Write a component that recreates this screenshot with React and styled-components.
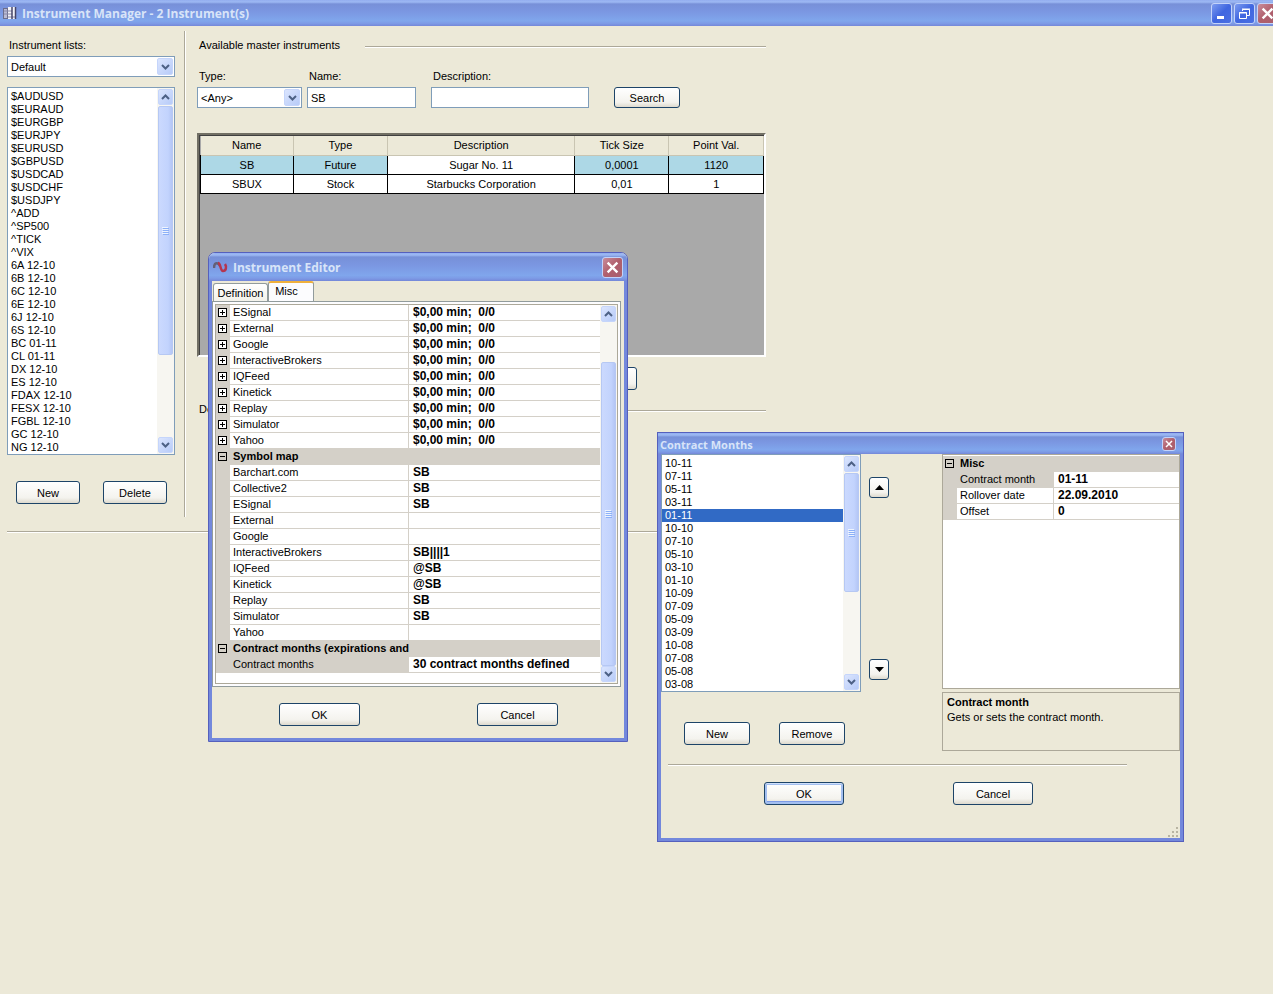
import React, { useState } from 'react';
import styled, { createGlobalStyle, css } from 'styled-components';

const GlobalStyle = createGlobalStyle`
  * {
    box-sizing: border-box;
  }
  body {
    margin: 0;
    background: #ece9d8;
    color: #000;
    font: 11px/14px "Liberation Sans", Arial, sans-serif;
    overflow: hidden;
  }
  button, input, select {
    font: inherit;
    color: inherit;
  }
`;

const Desktop = styled.div`
  position: relative;
  min-height: 100vh;
  overflow: hidden;
`;

const TitleBar = styled.header`
  display: flex;
  align-items: center;
  gap: 5px;
  height: ${(p) => p.$height}px;
  padding: 0 ${(p) => p.$pad}px;
  background: linear-gradient(#93aef0 0, #9db9f3 2px, #7790d8 4px, #7b97e2 45%, #80a6ec 80%, #7d9be6 90%, #7487d8 100%);
`;

const Title = styled.h1`
  flex: 1;
  margin: 0;
  padding-top: 2px;
  color: #d8e4f8;
  font-family: "Open Sans", "Noto Sans", sans-serif;
  font-size: ${(p) => p.$size || 12}px;
  font-weight: 700;
  line-height: 16px;
  white-space: nowrap;
`;

const CaptionButtons = styled.div`
  display: flex;
  gap: 2px;
  margin-right: -8px;
`;

const CaptionButton = styled.button`
  display: flex;
  align-items: center;
  justify-content: center;
  flex: none;
  width: ${(p) => p.$size || 21}px;
  height: ${(p) => p.$size || 21}px;
  padding: 0;
  border: 1px solid #c3d3fa;
  border-radius: 3px;
  background: ${(p) => (p.$close
    ? 'linear-gradient(135deg, #c98d9b, #b05f6c 50%, #a8606f)'
    : 'linear-gradient(135deg, #7d9cf0, #3f66e0 50%, #4a6fe2)')};
`;

const Workspace = styled.main`
  display: flex;
  padding-top: 5px;
`;

const Lists = styled.section`
  width: 185px;
  padding: 7px 9px 13px 7px;
  border-right: 1px solid #aca899;
  box-shadow: 1px 0 #fff;
`;

const Master = styled.section`
  flex: 1;
  max-width: 581px;
  padding: 7px 0 0 12px;
`;

const Field = styled.div`
  display: flex;
  flex-direction: column;
  gap: 4px;
  width: ${(p) => (p.$width ? `${p.$width}px` : 'auto')};
`;

const Label = styled.label`
  padding-left: 2px;
`;

const TextInput = styled.input`
  width: 100%;
  height: 21px;
  padding: 0 3px;
  border: 1px solid #7f9db9;
  background: #fff;
  outline: none;
`;

const ComboFrame = styled.div`
  display: flex;
  height: 21px;
  padding: 1px;
  border: 1px solid #7f9db9;
  background: #fff;
`;

const ComboSelect = styled.select`
  appearance: none;
  flex: 1;
  min-width: 0;
  padding: 0 2px;
  border: 0;
  background: transparent;
  outline: none;
`;

const arrowBox = css`
  display: flex;
  align-items: center;
  justify-content: center;
  flex: none;
  padding: 0;
  border: 1px solid #c5d5fb;
  border-radius: 2px;
  background: linear-gradient(135deg, #dbe5fe, #b7cbf8);
`;

const ComboArrow = styled.span`
  ${arrowBox}
  width: 16px;
`;

const ListFrame = styled.div`
  display: flex;
  margin-top: ${(p) => p.$top || 0}px;
  border: 1px solid #7f9db9;
  background: #fff;
`;

const ListSelect = styled.select`
  appearance: none;
  flex: 1;
  min-width: 0;
  height: ${(p) => p.size * 13 + 2}px;
  padding: 2px 0 0;
  border: 0;
  border-radius: 0;
  background: #fff;
  outline: none;
  overflow: hidden;

  option {
    height: 13px;
    min-height: 13px;
    padding: 0 3px;
    line-height: 13px;
  }
  option:checked {
    background: linear-gradient(#316ac5, #316ac5);
    -webkit-text-fill-color: #fff;
  }
`;

const ScrollTrack = styled.div`
  display: flex;
  flex-direction: column;
  flex: none;
  width: 17px;
  padding: 1px;
  background: #f7f6f1;
`;

const ScrollButton = styled.button`
  ${arrowBox}
  height: 16px;
`;

const ScrollThumb = styled.div`
  display: flex;
  align-items: center;
  justify-content: center;
  flex: none;
  height: ${(p) => p.$length}px;
  margin: ${(p) => p.$before}px 0 auto;
  border: 1px solid #b6c8f3;
  border-radius: 2px;
  background: linear-gradient(90deg, #cbd9fe, #c2d3fd 70%, #b4c6f5);
`;

const Button = styled.button`
  display: flex;
  align-items: center;
  justify-content: center;
  width: ${(p) => p.$width || 66}px;
  height: ${(p) => p.$height || 23}px;
  padding: 0;
  border: 1px solid #1d4468;
  border-radius: 3px;
  background: linear-gradient(#fff, #f4f3ee 75%, #dedace);
  ${(p) => p.$primary && 'box-shadow: inset 0 1px #cfe0fb, inset 0 0 0 2px #a3bff0, inset 0 -3px #7d9be6;'}
`;

const ButtonRow = styled.div`
  display: flex;
  gap: ${(p) => p.$gap || 0}px;
  padding: ${(p) => p.$pad || 0};
`;

const SectionHead = styled.div`
  display: flex;
  align-items: center;
  gap: 25px;
  padding-left: 2px;
`;

const Rule = styled.hr`
  flex: 1;
  height: 2px;
  margin: ${(p) => p.$margin || '3px 0 0'};
  border: 0;
  border-top: 1px solid #aca899;
  background: #fff;
`;

const SearchForm = styled.form`
  display: flex;
  align-items: flex-end;
  margin: 17px 0 25px;
`;

const Gap = styled.span`
  width: ${(p) => p.$width}px;
`;

const GridFrame = styled.div`
  min-height: 224px;
  margin-bottom: 10px;
  border: 2px solid;
  border-color: #716f64 #fff #fff #716f64;
  background: #a9a9a9;
  box-shadow: inset 1px 1px #404040;
  padding: 1px 0 0 1px;
`;

const DataGrid = styled.table`
  width: 100%;
  border-collapse: collapse;
  table-layout: fixed;
  text-align: center;

  th {
    height: 19px;
    padding: 0;
    background: #ece9d8;
    border-right: 1px solid #c9c5b2;
    font-weight: normal;
  }
  td {
    height: 19px;
    padding: 0;
    border: 1px solid #000;
    background: #fff;
  }
  tr.current td {
    background: #add8e6;
    border-top-color: #c9c5b2;
  }
  tr.current td:nth-child(3) {
    background: #fff;
  }
`;

const Dialog = styled.section`
  position: absolute;
  left: ${(p) => p.$left}px;
  top: ${(p) => p.$top}px;
  width: ${(p) => p.$width}px;
  background: #ece9d8;
  border: 1px solid #5560bd;
  border-radius: ${(p) => (p.$round ? '7px 7px 0 0' : 0)};
  overflow: hidden;
`;

const DialogBody = styled.div`
  border: solid #7388dc;
  border-width: 0 3px 3px;
`;

const Tabs = styled.div`
  display: flex;
  align-items: flex-end;
  height: 20px;
  padding-left: 1px;
`;

const Tab = styled.button`
  width: ${(p) => p.$width}px;
  height: ${(p) => (p.$active ? 20 : 18)}px;
  padding: 0;
  border: 1px solid #919b9c;
  border-bottom: 0;
  border-radius: 3px 3px 0 0;
  background: linear-gradient(#fff, #f3f2ea);
  ${(p) => p.$active && `
    padding: 0 9px 2px 0;
    border-top: 2px solid #efb03c;
    background: #fcfcfe;
  `}
`;

const TabPage = styled.div`
  margin-right: 3px;
  padding: 2px;
  border: 1px solid #919b9c;
  background: #fcfcfe;
`;

const PropertyFrame = styled.div`
  display: flex;
  align-items: stretch;
  min-height: ${(p) => p.$height}px;
  padding-top: ${(p) => p.$top || 0}px;
  border: 1px solid #aca899;
  background: #fff;
`;

const PropertyPane = styled.div`
  flex: 1;
  min-width: 0;
`;

const PropertyTable = styled.table`
  width: 100%;
  border-spacing: 0;
  table-layout: fixed;
  text-align: left;

  th, td {
    height: 16px;
    padding: 0 0 0 3px;
    border-bottom: 1px solid #d4d0c8;
    line-height: 15px;
    white-space: pre;
  }
  th {
    font-weight: normal;
  }
  th:first-child, td:first-child {
    padding: 0 0 0 1px;
    background: #d4d0c8;
  }
  td:last-child {
    padding-left: 4px;
    border-left: 1px solid #d4d0c8;
    font-size: 12px;
    font-weight: bold;
  }
  tr.category th {
    background: #d4d0c8;
    font-weight: bold;
  }
  tr.active th {
    background: #d4d0c8;
  }
`;

const Expander = styled.button`
  display: block;
  width: 11px;
  height: 11px;
  padding: 0;
  border: 0;
  background: none;

  svg {
    display: block;
  }
`;

const MonthsLayout = styled.div`
  display: flex;
  align-items: flex-start;
`;

const MonthsList = styled.div`
  width: 200px;
`;

const MoveButtons = styled.div`
  display: flex;
  flex-direction: column;
  gap: 161px;
  padding: 23px 0 0 8px;
`;

const MonthProperties = styled.div`
  width: 238px;
  margin-left: auto;
`;

const Help = styled.div`
  min-height: 59px;
  margin-top: 3px;
  padding: 2px 4px;
  border: 1px solid #aca899;
  line-height: 15px;

  p {
    margin: 0;
  }
`;

const Grip = styled.svg`
  display: block;
  margin-left: auto;
`;

function Chevron({ up }) {
  return (
    <svg width="9" height="6" viewBox="0 0 9 6" aria-hidden="true">
      <path d={up ? 'M1 5 4.500 1.500 8 5' : 'M1 1 4.500 4.500 8 1'} fill="none" stroke="#4d6185" strokeWidth="2" />
    </svg>
  );
}

function Cross({ size }) {
  return (
    <svg width={size} height={size} viewBox="0 0 12 12" aria-hidden="true">
      <path d="M1.500 1.500 10.500 10.500M10.500 1.500 1.500 10.500" stroke="#fff" strokeWidth="2.200" />
    </svg>
  );
}

function ScrollBar({ length, before = 1 }) {
  return (
    <ScrollTrack>
      <ScrollButton type="button" aria-label="Scroll up"><Chevron up /></ScrollButton>
      <ScrollThumb $length={length} $before={before}>
        <svg width="7" height="8" viewBox="0 0 7 8" aria-hidden="true">
          <path d="M0 .5h6M0 2.500h6M0 4.500h6M0 6.500h6" stroke="#eef4fe" />
          <path d="M1 1.500h6M1 3.500h6M1 5.500h6M1 7.500h6" stroke="#8cb0f8" />
        </svg>
      </ScrollThumb>
      <ScrollButton type="button" aria-label="Scroll down"><Chevron /></ScrollButton>
    </ScrollTrack>
  );
}

function Combo({ id, value }) {
  return (
    <ComboFrame>
      <ComboSelect id={id} defaultValue={value}>
        <option>{value}</option>
      </ComboSelect>
      <ComboArrow><Chevron /></ComboArrow>
    </ComboFrame>
  );
}

function Properties({ rows, nameWidth }) {
  return (
    <PropertyTable>
      <colgroup>
        <col style={{ width: 14 }} />
        <col style={{ width: nameWidth }} />
        <col />
      </colgroup>
      <tbody>
        {rows.map((row, i) => (
          <tr key={i} className={row.category ? 'category' : row.active ? 'active' : ''}>
            <td>
              {(row.category || row.expandable) && (
                <Expander type="button" aria-label={row.category ? 'Collapse' : 'Expand'}>
                  <svg width="11" height="11" viewBox="0 0 11 11">
                    <rect x="1.500" y="1.500" width="8" height="8" fill={row.category ? 'none' : '#fff'} stroke="#000" />
                    <path d={row.category ? 'M3 5.500h5' : 'M3 5.500h5M5.500 3v5'} stroke="#000" />
                  </svg>
                </Expander>
              )}
            </td>
            {row.category ? <th colSpan={2}>{row.name}</th> : (
              <>
                <th>{row.name}</th>
                <td>{row.value}</td>
              </>
            )}
          </tr>
        ))}
      </tbody>
    </PropertyTable>
  );
}

const instruments = [
  '$AUDUSD', '$EURAUD', '$EURGBP', '$EURJPY', '$EURUSD', '$GBPUSD', '$USDCAD', '$USDCHF', '$USDJPY',
  '^ADD', '^SP500', '^TICK', '^VIX', '6A 12-10', '6B 12-10', '6C 12-10', '6E 12-10', '6J 12-10',
  '6S 12-10', 'BC 01-11', 'CL 01-11', 'DX 12-10', 'ES 12-10', 'FDAX 12-10', 'FESX 12-10',
  'FGBL 12-10', 'GC 12-10', 'NG 12-10',
];

const months = [
  '10-11', '07-11', '05-11', '03-11', '01-11', '10-10', '07-10', '05-10', '03-10', '01-10',
  '10-09', '07-09', '05-09', '03-09', '10-08', '07-08', '05-08', '03-08',
];

const providers = ['ESignal', 'External', 'Google', 'InteractiveBrokers', 'IQFeed', 'Kinetick', 'Replay', 'Simulator', 'Yahoo'];

const editorRows = [
  ...providers.map((name) => ({ name, value: '$0,00 min;  0/0', expandable: true })),
  { category: true, name: 'Symbol map' },
  { name: 'Barchart.com', value: 'SB' },
  { name: 'Collective2', value: 'SB' },
  { name: 'ESignal', value: 'SB' },
  { name: 'External', value: '' },
  { name: 'Google', value: '' },
  { name: 'InteractiveBrokers', value: 'SB||||1' },
  { name: 'IQFeed', value: '@SB' },
  { name: 'Kinetick', value: '@SB' },
  { name: 'Replay', value: 'SB' },
  { name: 'Simulator', value: 'SB' },
  { name: 'Yahoo', value: '' },
  { category: true, name: 'Contract months (expirations and' },
  { name: 'Contract months', value: '30 contract months defined', active: true },
];

const masters = [
  ['SB', 'Future', 'Sugar No. 11', '0,0001', '1120'],
  ['SBUX', 'Stock', 'Starbucks Corporation', '0,01', '1'],
];

function InstrumentEditor() {
  return (
    <Dialog $left={208} $top={252} $width={420} $round aria-label="Instrument Editor">
      <TitleBar $height={28} $pad={4}>
        <svg width="15" height="12" viewBox="0 0 15 12" aria-hidden="true">
          <path d="M1 7C1 1 5 1 7 5" fill="none" stroke="#646078" strokeWidth="2.500" />
          <path d="M5 2C8 2 7 10 10 10 13 10 14 6 12 3" fill="none" stroke="#b5354f" strokeWidth="2.500" />
        </svg>
        <Title as="h2">Instrument Editor</Title>
        <CaptionButton type="button" $close aria-label="Close"><Cross size={13} /></CaptionButton>
      </TitleBar>
      <DialogBody>
        <Tabs>
          <Tab type="button" $width={55}>Definition</Tab>
          <Tab type="button" $width={46} $active>Misc</Tab>
        </Tabs>
        <TabPage>
          <PropertyFrame $height={380}>
            <PropertyPane><Properties rows={editorRows} nameWidth={178} /></PropertyPane>
            <ScrollBar length={304} before={40} />
          </PropertyFrame>
        </TabPage>
        <ButtonRow $gap={117} $pad="16px 0 12px 67px">
          <Button type="button" $width={81}>OK</Button>
          <Button type="button" $width={81}>Cancel</Button>
        </ButtonRow>
      </DialogBody>
    </Dialog>
  );
}

function ContractMonths() {
  const [month, setMonth] = useState('01-11');

  return (
    <Dialog $left={657} $top={432} $width={527} aria-label="Contract Months">
      <TitleBar $height={21} $pad={2}>
        <Title as="h2" $size={11}>Contract Months</Title>
        <CaptionButton type="button" $close $size={14} aria-label="Close"><Cross size={8} /></CaptionButton>
        <Gap />
      </TitleBar>
      <DialogBody>
        <MonthsLayout>
          <MonthsList>
            <ListFrame>
              <ListSelect size={18} aria-label="Months" value={month} onChange={(e) => setMonth(e.target.value)}>
                {months.map((m) => <option key={m}>{m}</option>)}
              </ListSelect>
              <ScrollBar length={119} />
            </ListFrame>
            <ButtonRow $gap={29} $pad="30px 0 0 23px">
              <Button type="button">New</Button>
              <Button type="button">Remove</Button>
            </ButtonRow>
          </MonthsList>
          <MoveButtons>
            <Button type="button" $width={20} $height={21} aria-label="Move up">
              <svg width="9" height="5" viewBox="0 0 9 5"><path d="M0 5 4.500 0 9 5Z" /></svg>
            </Button>
            <Button type="button" $width={20} $height={21} aria-label="Move down">
              <svg width="9" height="5" viewBox="0 0 9 5"><path d="M0 0 4.500 5 9 0Z" /></svg>
            </Button>
          </MoveButtons>
          <MonthProperties>
            <PropertyFrame $height={235} $top={1}>
              <PropertyPane>
                <Properties
                  nameWidth={96}
                  rows={[
                    { category: true, name: 'Misc' },
                    { name: 'Contract month', value: month, active: true },
                    { name: 'Rollover date', value: '22.09.2010' },
                    { name: 'Offset', value: '0' },
                  ]}
                />
              </PropertyPane>
            </PropertyFrame>
            <Help>
              <p><strong>Contract month</strong></p>
              <p>Gets or sets the contract month.</p>
            </Help>
          </MonthProperties>
        </MonthsLayout>
        <Rule $margin="13px 53px 16px 7px" />
        <ButtonRow $gap={109} $pad="0 0 0 103px">
          <Button type="button" $width={80} $primary>OK</Button>
          <Button type="button" $width={80}>Cancel</Button>
        </ButtonRow>
        <ButtonRow $pad="21px 0 0">
          <Grip width="12" height="12" viewBox="0 0 12 12" aria-hidden="true">
            <path d="M8 1h2v2h-2zM4 5h2v2h-2zM8 5h2v2h-2zM0 9h2v2h-2zM4 9h2v2h-2zM8 9h2v2h-2z" fill="#b8b4a2" />
          </Grip>
        </ButtonRow>
      </DialogBody>
    </Dialog>
  );
}

export default function App() {
  return (
    <Desktop>
      <GlobalStyle />
      <TitleBar $height={26} $pad={3}>
        <svg width="14" height="14" viewBox="0 0 14 14" aria-hidden="true">
          <path d="M0 2h9v11H0z" fill="#6d6e8c" />
          <path d="M1 3h3v9H1z" fill="#b9bbd4" />
          <path d="M5 1h8v12H5z" fill="#f4f4fa" />
          <path d="M1 5h8M1 8h8M5 11h8" stroke="#8888aa" />
          <path d="M9 1v12M12.500 1v12" stroke="#45456a" strokeWidth="1.500" />
        </svg>
        <Title>Instrument Manager - 2 Instrument(s)</Title>
        <CaptionButtons>
          <CaptionButton type="button" aria-label="Minimize">
            <svg width="13" height="13" viewBox="0 0 13 13"><path d="M2 9h7v3H2z" fill="#fff" /></svg>
          </CaptionButton>
          <CaptionButton type="button" aria-label="Restore">
            <svg width="13" height="13" viewBox="0 0 13 13" fill="none" stroke="#fff">
              <path d="M4.500 4V2.500h7v6H9M4 2h8M1.500 5.500h7v6h-7zM1 6h8" />
            </svg>
          </CaptionButton>
          <CaptionButton type="button" $close aria-label="Close"><Cross size={13} /></CaptionButton>
        </CaptionButtons>
      </TitleBar>

      <Workspace>
        <Lists>
          <Field>
            <Label htmlFor="lists">Instrument lists:</Label>
            <Combo id="lists" value="Default" />
          </Field>
          <ListFrame $top={10}>
            <ListSelect size={28} aria-label="Instruments">
              {instruments.map((name) => <option key={name}>{name}</option>)}
            </ListSelect>
            <ScrollBar length={249} />
          </ListFrame>
          <ButtonRow $gap={23} $pad="26px 0 0 9px">
            <Button type="button" $width={64}>New</Button>
            <Button type="button" $width={64}>Delete</Button>
          </ButtonRow>
        </Lists>

        <Master>
          <SectionHead>Available master instruments<Rule /></SectionHead>
          <SearchForm onSubmit={(e) => e.preventDefault()}>
            <Field $width={105}>
              <Label htmlFor="type">Type:</Label>
              <Combo id="type" value="<Any>" />
            </Field>
            <Gap $width={5} />
            <Field $width={109}>
              <Label htmlFor="name">Name:</Label>
              <TextInput id="name" defaultValue="SB" />
            </Field>
            <Gap $width={15} />
            <Field $width={158}>
              <Label htmlFor="description">Description:</Label>
              <TextInput id="description" />
            </Field>
            <Gap $width={25} />
            <Button $width={66} $height={21}>Search</Button>
          </SearchForm>
          <GridFrame>
            <DataGrid>
              <colgroup>
                <col style={{ width: '16.5%' }} />
                <col style={{ width: '16.7%' }} />
                <col style={{ width: '33.3%' }} />
                <col style={{ width: '16.7%' }} />
                <col />
              </colgroup>
              <thead>
                <tr>
                  <th>Name</th>
                  <th>Type</th>
                  <th>Description</th>
                  <th>Tick Size</th>
                  <th>Point Val.</th>
                </tr>
              </thead>
              <tbody>
                {masters.map((row, i) => (
                  <tr key={row[0]} className={i === 0 ? 'current' : ''}>
                    {row.map((cell, j) => <td key={j}>{cell}</td>)}
                  </tr>
                ))}
              </tbody>
            </DataGrid>
          </GridFrame>
          <ButtonRow $pad="0 0 12px 374px">
            <Button type="button" aria-label="Add" />
          </ButtonRow>
          <SectionHead>Details<Rule /></SectionHead>
        </Master>
      </Workspace>
      <Rule $margin="14px 507px 0 7px" />

      <InstrumentEditor />
      <ContractMonths />
    </Desktop>
  );
}
